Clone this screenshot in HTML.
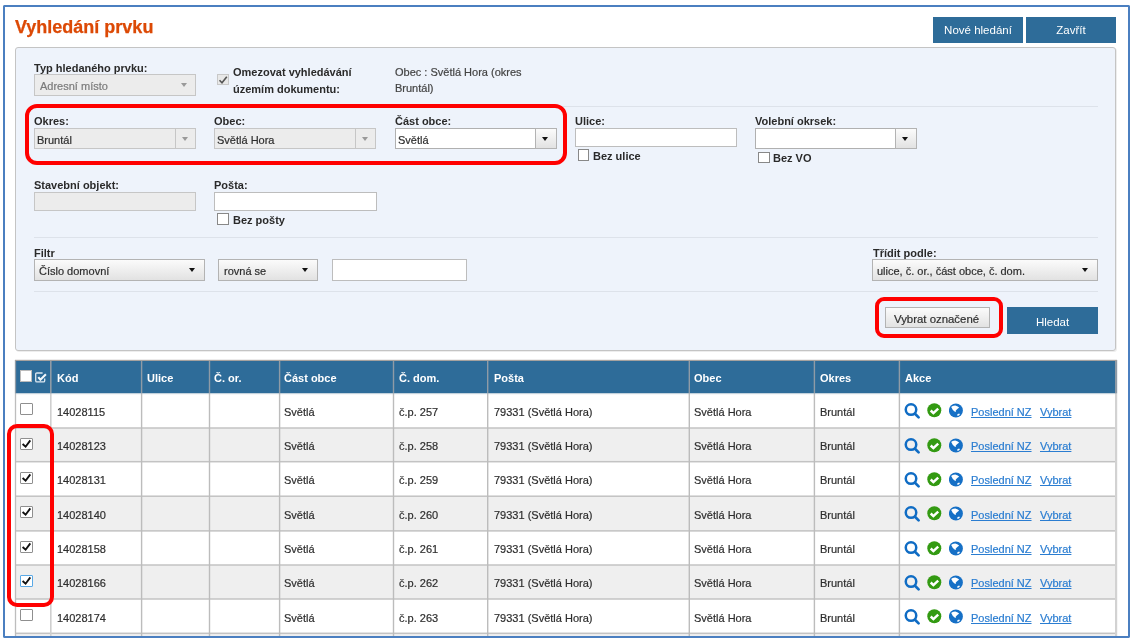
<!DOCTYPE html>
<html><head><meta charset="utf-8">
<style>
*{box-sizing:border-box}
html,body{margin:0;padding:0;background:#fff;width:1136px;height:642px;overflow:hidden;font-family:"Liberation Sans",sans-serif;color:#333}
.a{position:absolute}
#root{position:absolute;left:0;top:0;width:1136px;height:642px;will-change:transform}
#frame{left:3px;top:5px;width:1127px;height:633px;border:2px solid #4b7fc0;border-radius:2px}
#title{left:15px;top:17px;font:bold 18px "Liberation Sans",sans-serif;color:#dc4905;-webkit-text-stroke:0.25px #dc4905;white-space:nowrap}
.btn{background:#2e6c99;color:#fff;font-size:11.5px;text-align:center;white-space:nowrap}
#panel{left:15px;top:47px;width:1101px;height:304px;background:#eef3fb;border:1px solid #c4c4c4;border-radius:3px;box-shadow:1px 1px 0 rgba(0,0,0,.07)}
.lbl{font:bold 11px "Liberation Sans",sans-serif;color:#2a2a2a;white-space:nowrap;line-height:13px}
.txt{font:11px "Liberation Sans",sans-serif;color:#2e2e2e;-webkit-text-stroke-width:0.2px;white-space:nowrap;line-height:13px}
.inp{background:#fff;border:1px solid #bdbdbd}
.dis{background:#ececec;border:1px solid #c6c6c6}
.hr{background:#dde2ea}
.cb{border:1px solid #8f8f8f;background:#fff}
.red{border:4px solid #f00;border-radius:11px}
.selg{background:linear-gradient(#fbfbfb,#e2e2e2);border:1px solid #b3b3b3}
.arr{width:0;height:0;border-left:3.5px solid transparent;border-right:3.5px solid transparent;border-top:4px solid #111}
.arrg{width:0;height:0;border-left:3.5px solid transparent;border-right:3.5px solid transparent;border-top:4px solid #9a9a9a}
.th{background:#2e6b98}
.hd{font:bold 11px "Liberation Sans",sans-serif;color:#fff;white-space:nowrap;line-height:13px}
.vl{background:#c9c9c9}
.lnk{color:#2a7dd1;text-decoration:underline;text-decoration-skip-ink:none}
</style></head><body><div id="root">
<div id="frame" class="a"></div>
<div id="title" class="a">Vyhledání prvku</div>
<div class="a btn" style="left:933px;top:17px;width:90px;height:26px;line-height:26px">Nové hledání</div>
<div class="a btn" style="left:1026px;top:17px;width:90px;height:26px;line-height:26px">Zavřít</div>
<div id="panel" class="a"></div>
<div class="a lbl" style="left:34px;top:62px;">Typ hledaného prvku:</div>
<div class="a dis" style="left:34px;top:74px;width:162px;height:22px;"></div>
<div class="a txt" style="left:40px;top:80px;color:#7a7a7a">Adresní místo</div>
<div class="a arrg" style="left:181px;top:83px"></div>
<div class="a cb" style="left:217px;top:74px;width:12px;height:11px;background:#e8e8e8;border-color:#c8c8c8"></div>
<svg class="a" style="left:217px;top:74px" width="12" height="12"><path d="M2.5 6.2 L5 8.8 L9.8 2.8" stroke="#555" stroke-width="1.6" fill="none"/></svg>
<div class="a lbl" style="left:233px;top:66px;">Omezovat vyhledávání</div>
<div class="a lbl" style="left:233px;top:83px;">územím dokumentu:</div>
<div class="a txt" style="left:395px;top:66px;color:#444">Obec : Světlá Hora (okres</div>
<div class="a txt" style="left:395px;top:82px;color:#444">Bruntál)</div>
<div class="a hr" style="left:34px;top:106px;width:1064px;height:1px;"></div>
<div class="a lbl" style="left:34px;top:115px;">Okres:</div>
<div class="a dis" style="left:34px;top:128px;width:162px;height:21px;"></div>
<div class="a " style="left:175px;top:128px;width:1px;height:21px;background:#c6c6c6"></div>
<div class="a txt" style="left:37px;top:134px;">Bruntál</div>
<div class="a arrg" style="left:182px;top:137px"></div>
<div class="a lbl" style="left:214px;top:115px;">Obec:</div>
<div class="a dis" style="left:214px;top:128px;width:162px;height:21px;"></div>
<div class="a " style="left:355px;top:128px;width:1px;height:21px;background:#c6c6c6"></div>
<div class="a txt" style="left:217px;top:134px;">Světlá Hora</div>
<div class="a arrg" style="left:362px;top:137px"></div>
<div class="a lbl" style="left:395px;top:115px;">Část obce:</div>
<div class="a inp" style="left:395px;top:128px;width:162px;height:21px;border-color:#b0b0b0"></div>
<div class="a selg" style="left:535px;top:128px;width:22px;height:21px;"></div>
<div class="a txt" style="left:398px;top:134px;">Světlá</div>
<div class="a arr" style="left:542px;top:137px"></div>
<div class="a lbl" style="left:575px;top:115px;">Ulice:</div>
<div class="a inp" style="left:575px;top:128px;width:162px;height:19px;"></div>
<div class="a cb" style="left:578px;top:149px;width:11px;height:12px;border-color:#888"></div>
<div class="a lbl" style="left:593px;top:150px;">Bez ulice</div>
<div class="a lbl" style="left:755px;top:115px;">Volební okrsek:</div>
<div class="a inp" style="left:755px;top:128px;width:162px;height:21px;border-color:#b0b0b0"></div>
<div class="a selg" style="left:895px;top:128px;width:22px;height:21px;"></div>
<div class="a arr" style="left:902px;top:137px"></div>
<div class="a cb" style="left:758px;top:152px;width:12px;height:11px;border-color:#888"></div>
<div class="a lbl" style="left:773px;top:152px;">Bez VO</div>
<div class="a red" style="left:25px;top:104px;width:542px;height:61px;border-radius:12px"></div>
<div class="a lbl" style="left:34px;top:179px;">Stavební objekt:</div>
<div class="a dis" style="left:34px;top:192px;width:162px;height:19px;"></div>
<div class="a lbl" style="left:214px;top:179px;">Pošta:</div>
<div class="a inp" style="left:214px;top:192px;width:163px;height:19px;"></div>
<div class="a cb" style="left:217px;top:213px;width:12px;height:12px;border-color:#888"></div>
<div class="a lbl" style="left:233px;top:214px;">Bez pošty</div>
<div class="a hr" style="left:34px;top:237px;width:1064px;height:1px;"></div>
<div class="a lbl" style="left:34px;top:247px;">Filtr</div>
<div class="a selg" style="left:34px;top:259px;width:171px;height:22px;"></div>
<div class="a txt" style="left:39px;top:265px;">Číslo domovní</div>
<div class="a arr" style="left:189px;top:268px"></div>
<div class="a selg" style="left:218px;top:259px;width:100px;height:22px;"></div>
<div class="a txt" style="left:224px;top:265px;">rovná se</div>
<div class="a arr" style="left:302px;top:268px"></div>
<div class="a inp" style="left:332px;top:259px;width:135px;height:22px;"></div>
<div class="a lbl" style="left:873px;top:247px;">Třídit podle:</div>
<div class="a selg" style="left:872px;top:259px;width:226px;height:22px;"></div>
<div class="a txt" style="left:877px;top:265px;">ulice, č. or., část obce, č. dom.</div>
<div class="a arr" style="left:1082px;top:268px"></div>
<div class="a hr" style="left:34px;top:291px;width:1064px;height:1px;"></div>
<div class="a selg" style="left:885px;top:307px;width:105px;height:21px;"></div>
<div class="a txt" style="left:894px;top:313px;font-size:11.4px">Vybrat označené</div>
<div class="a red" style="left:875px;top:297px;width:128px;height:41px;border-radius:9px"></div>
<div class="a btn" style="left:1007px;top:307px;width:91px;height:27px;line-height:31px;font-size:11.5px">Hledat</div>
<svg class="a" style="left:0;top:0" width="1136" height="642"><rect x="15" y="360.5" width="1101" height="32.9" fill="#2e6c99"/><rect x="15" y="428" width="1101" height="33.70" fill="#efefef"/><rect x="15" y="496.2" width="1101" height="34.70" fill="#efefef"/><rect x="15" y="565" width="1101" height="34.00" fill="#efefef"/><rect x="15" y="633.3" width="1101" height="34.20" fill="#efefef"/><rect x="15" y="427.25" width="1102" height="1.5" fill="#c3c3c3"/><rect x="15" y="460.95" width="1102" height="1.5" fill="#c3c3c3"/><rect x="15" y="495.45" width="1102" height="1.5" fill="#c3c3c3"/><rect x="15" y="530.15" width="1102" height="1.5" fill="#c3c3c3"/><rect x="15" y="564.25" width="1102" height="1.5" fill="#c3c3c3"/><rect x="15" y="598.25" width="1102" height="1.5" fill="#c3c3c3"/><rect x="15" y="632.55" width="1102" height="1.5" fill="#c3c3c3"/><rect x="15" y="666.75" width="1102" height="1.5" fill="#c3c3c3"/><rect x="15" y="393.2" width="1102" height="1.2" fill="#d8dde2" opacity="0.6"/><rect x="14.85" y="393.4" width="1.3" height="250" fill="#bdbdbd"/><rect x="14.85" y="360" width="1.3" height="33.4" fill="#8f9ba6"/><rect x="50.00" y="393.4" width="1.6" height="250" fill="#cfcfcf"/><rect x="50.00" y="360" width="1.6" height="33.4" fill="#8f9ba6"/><rect x="140.90" y="393.4" width="1.4" height="250" fill="#bcbcbc"/><rect x="140.90" y="360" width="1.4" height="33.4" fill="#8f9ba6"/><rect x="208.80" y="393.4" width="1.4" height="250" fill="#bcbcbc"/><rect x="208.80" y="360" width="1.4" height="33.4" fill="#8f9ba6"/><rect x="278.90" y="393.4" width="1.4" height="250" fill="#bcbcbc"/><rect x="278.90" y="360" width="1.4" height="33.4" fill="#8f9ba6"/><rect x="392.80" y="393.4" width="1.4" height="250" fill="#bcbcbc"/><rect x="392.80" y="360" width="1.4" height="33.4" fill="#8f9ba6"/><rect x="487.00" y="393.4" width="1.4" height="250" fill="#bcbcbc"/><rect x="487.00" y="360" width="1.4" height="33.4" fill="#8f9ba6"/><rect x="688.60" y="393.4" width="1.4" height="250" fill="#bcbcbc"/><rect x="688.60" y="360" width="1.4" height="33.4" fill="#8f9ba6"/><rect x="813.70" y="393.4" width="1.4" height="250" fill="#bcbcbc"/><rect x="813.70" y="360" width="1.4" height="33.4" fill="#8f9ba6"/><rect x="898.70" y="393.4" width="1.4" height="250" fill="#bcbcbc"/><rect x="898.70" y="360" width="1.4" height="33.4" fill="#8f9ba6"/><rect x="1115.00" y="393.4" width="2.2" height="250" fill="#d2d2d2"/><rect x="1115.00" y="360" width="2.2" height="33.4" fill="#8f9ba6"/><rect x="15" y="359.8" width="1102" height="1.2" fill="#a6a29f"/></svg>
<div class="a hd" style="left:57px;top:372px;">Kód</div>
<div class="a hd" style="left:147px;top:372px;">Ulice</div>
<div class="a hd" style="left:214px;top:372px;">Č. or.</div>
<div class="a hd" style="left:284px;top:372px;">Část obce</div>
<div class="a hd" style="left:399px;top:372px;">Č. dom.</div>
<div class="a hd" style="left:494px;top:372px;">Pošta</div>
<div class="a hd" style="left:694px;top:372px;">Obec</div>
<div class="a hd" style="left:820px;top:372px;">Okres</div>
<div class="a hd" style="left:905px;top:372px;">Akce</div>
<div class="a cb" style="left:20px;top:370px;width:12px;height:12px;border-color:#bbb"></div>
<svg class="a" style="left:35px;top:372px" width="12" height="11"><path d="M7.6 1 H1.9 Q0.7 1 0.7 2.2 V8.7 Q0.7 9.9 1.9 9.9 H8.5 Q9.7 9.9 9.7 8.7 V6.4" fill="none" stroke="#dde8f1" stroke-width="1.3"/><path d="M3.3 5.1 L5.4 7.7 L10.9 2.2" stroke="#f4f8fb" stroke-width="2.1" fill="none"/></svg>
<div class="a cb" style="left:20px;top:403px;width:13px;height:12px;border-color:#8f8f8f;border-radius:1px"></div>
<div class="a txt" style="left:57px;top:406px;">14028115</div>
<div class="a txt" style="left:284px;top:406px;">Světlá</div>
<div class="a txt" style="left:399px;top:406px;">č.p. 257</div>
<div class="a txt" style="left:494px;top:406px;">79331 (Světlá Hora)</div>
<div class="a txt" style="left:694px;top:406px;">Světlá Hora</div>
<div class="a txt" style="left:820px;top:406px;">Bruntál</div>
<svg class="a" style="left:902px;top:403px" width="20" height="18"><circle cx="9" cy="6.6" r="5.25" stroke="#0f6cc4" stroke-width="2.5" fill="none"/><path d="M13 10.8 L16.6 14.4" stroke="#0f6cc4" stroke-width="2.7" stroke-linecap="round"/></svg>
<svg class="a" style="left:927px;top:403px" width="15" height="15"><circle cx="7.3" cy="7.3" r="7" fill="#339a12"/><path d="M3.7 7.5 L6.4 10.1 L11.2 5.6" stroke="#fff" stroke-width="2.5" fill="none"/></svg>
<svg class="a" style="left:949px;top:403px" width="15" height="15"><circle cx="6.9" cy="7.5" r="7" fill="#1670c6"/><path d="M2.2 4.1 Q3 2.9 4.6 2.7 L6.3 2.6 Q7.5 3.1 8.7 3.6 L10.1 4.4 Q9.3 5.2 8.6 5.7 L7.3 6.9 Q6.5 7.6 6.6 8.1 L7.1 9.1 Q6 8.9 5.2 8.3 L4.2 7.3 Q3.6 6.6 3.3 5.9 Z" fill="#fff"/><ellipse cx="9.4" cy="11.7" rx="1.5" ry="0.9" transform="rotate(-25 9.4 11.7)" fill="#fff"/></svg>
<div class="a txt" style="left:971px;top:406px;"><span class="lnk">Poslední NZ</span></div>
<div class="a txt" style="left:1040px;top:406px;"><span class="lnk">Vybrat</span></div>
<div class="a cb" style="left:20px;top:438px;width:13px;height:12px;border-color:#8f8f8f;border-radius:1px"></div>
<svg class="a" style="left:20px;top:438px" width="13" height="12"><path d="M2.6 6 L5.6 8.7 L10.3 2.4" stroke="#111" stroke-width="1.9" fill="none"/></svg>
<div class="a txt" style="left:57px;top:440px;">14028123</div>
<div class="a txt" style="left:284px;top:440px;">Světlá</div>
<div class="a txt" style="left:399px;top:440px;">č.p. 258</div>
<div class="a txt" style="left:494px;top:440px;">79331 (Světlá Hora)</div>
<div class="a txt" style="left:694px;top:440px;">Světlá Hora</div>
<div class="a txt" style="left:820px;top:440px;">Bruntál</div>
<svg class="a" style="left:902px;top:438px" width="20" height="18"><circle cx="9" cy="6.6" r="5.25" stroke="#0f6cc4" stroke-width="2.5" fill="none"/><path d="M13 10.8 L16.6 14.4" stroke="#0f6cc4" stroke-width="2.7" stroke-linecap="round"/></svg>
<svg class="a" style="left:927px;top:438px" width="15" height="15"><circle cx="7.3" cy="7.3" r="7" fill="#339a12"/><path d="M3.7 7.5 L6.4 10.1 L11.2 5.6" stroke="#fff" stroke-width="2.5" fill="none"/></svg>
<svg class="a" style="left:949px;top:438px" width="15" height="15"><circle cx="6.9" cy="7.5" r="7" fill="#1670c6"/><path d="M2.2 4.1 Q3 2.9 4.6 2.7 L6.3 2.6 Q7.5 3.1 8.7 3.6 L10.1 4.4 Q9.3 5.2 8.6 5.7 L7.3 6.9 Q6.5 7.6 6.6 8.1 L7.1 9.1 Q6 8.9 5.2 8.3 L4.2 7.3 Q3.6 6.6 3.3 5.9 Z" fill="#fff"/><ellipse cx="9.4" cy="11.7" rx="1.5" ry="0.9" transform="rotate(-25 9.4 11.7)" fill="#fff"/></svg>
<div class="a txt" style="left:971px;top:440px;"><span class="lnk">Poslední NZ</span></div>
<div class="a txt" style="left:1040px;top:440px;"><span class="lnk">Vybrat</span></div>
<div class="a cb" style="left:20px;top:472px;width:13px;height:12px;border-color:#8f8f8f;border-radius:1px"></div>
<svg class="a" style="left:20px;top:472px" width="13" height="12"><path d="M2.6 6 L5.6 8.7 L10.3 2.4" stroke="#111" stroke-width="1.9" fill="none"/></svg>
<div class="a txt" style="left:57px;top:474px;">14028131</div>
<div class="a txt" style="left:284px;top:474px;">Světlá</div>
<div class="a txt" style="left:399px;top:474px;">č.p. 259</div>
<div class="a txt" style="left:494px;top:474px;">79331 (Světlá Hora)</div>
<div class="a txt" style="left:694px;top:474px;">Světlá Hora</div>
<div class="a txt" style="left:820px;top:474px;">Bruntál</div>
<svg class="a" style="left:902px;top:472px" width="20" height="18"><circle cx="9" cy="6.6" r="5.25" stroke="#0f6cc4" stroke-width="2.5" fill="none"/><path d="M13 10.8 L16.6 14.4" stroke="#0f6cc4" stroke-width="2.7" stroke-linecap="round"/></svg>
<svg class="a" style="left:927px;top:472px" width="15" height="15"><circle cx="7.3" cy="7.3" r="7" fill="#339a12"/><path d="M3.7 7.5 L6.4 10.1 L11.2 5.6" stroke="#fff" stroke-width="2.5" fill="none"/></svg>
<svg class="a" style="left:949px;top:472px" width="15" height="15"><circle cx="6.9" cy="7.5" r="7" fill="#1670c6"/><path d="M2.2 4.1 Q3 2.9 4.6 2.7 L6.3 2.6 Q7.5 3.1 8.7 3.6 L10.1 4.4 Q9.3 5.2 8.6 5.7 L7.3 6.9 Q6.5 7.6 6.6 8.1 L7.1 9.1 Q6 8.9 5.2 8.3 L4.2 7.3 Q3.6 6.6 3.3 5.9 Z" fill="#fff"/><ellipse cx="9.4" cy="11.7" rx="1.5" ry="0.9" transform="rotate(-25 9.4 11.7)" fill="#fff"/></svg>
<div class="a txt" style="left:971px;top:474px;"><span class="lnk">Poslední NZ</span></div>
<div class="a txt" style="left:1040px;top:474px;"><span class="lnk">Vybrat</span></div>
<div class="a cb" style="left:20px;top:506px;width:13px;height:12px;border-color:#8f8f8f;border-radius:1px"></div>
<svg class="a" style="left:20px;top:506px" width="13" height="12"><path d="M2.6 6 L5.6 8.7 L10.3 2.4" stroke="#111" stroke-width="1.9" fill="none"/></svg>
<div class="a txt" style="left:57px;top:509px;">14028140</div>
<div class="a txt" style="left:284px;top:509px;">Světlá</div>
<div class="a txt" style="left:399px;top:509px;">č.p. 260</div>
<div class="a txt" style="left:494px;top:509px;">79331 (Světlá Hora)</div>
<div class="a txt" style="left:694px;top:509px;">Světlá Hora</div>
<div class="a txt" style="left:820px;top:509px;">Bruntál</div>
<svg class="a" style="left:902px;top:506px" width="20" height="18"><circle cx="9" cy="6.6" r="5.25" stroke="#0f6cc4" stroke-width="2.5" fill="none"/><path d="M13 10.8 L16.6 14.4" stroke="#0f6cc4" stroke-width="2.7" stroke-linecap="round"/></svg>
<svg class="a" style="left:927px;top:506px" width="15" height="15"><circle cx="7.3" cy="7.3" r="7" fill="#339a12"/><path d="M3.7 7.5 L6.4 10.1 L11.2 5.6" stroke="#fff" stroke-width="2.5" fill="none"/></svg>
<svg class="a" style="left:949px;top:506px" width="15" height="15"><circle cx="6.9" cy="7.5" r="7" fill="#1670c6"/><path d="M2.2 4.1 Q3 2.9 4.6 2.7 L6.3 2.6 Q7.5 3.1 8.7 3.6 L10.1 4.4 Q9.3 5.2 8.6 5.7 L7.3 6.9 Q6.5 7.6 6.6 8.1 L7.1 9.1 Q6 8.9 5.2 8.3 L4.2 7.3 Q3.6 6.6 3.3 5.9 Z" fill="#fff"/><ellipse cx="9.4" cy="11.7" rx="1.5" ry="0.9" transform="rotate(-25 9.4 11.7)" fill="#fff"/></svg>
<div class="a txt" style="left:971px;top:509px;"><span class="lnk">Poslední NZ</span></div>
<div class="a txt" style="left:1040px;top:509px;"><span class="lnk">Vybrat</span></div>
<div class="a cb" style="left:20px;top:541px;width:13px;height:12px;border-color:#8f8f8f;border-radius:1px"></div>
<svg class="a" style="left:20px;top:541px" width="13" height="12"><path d="M2.6 6 L5.6 8.7 L10.3 2.4" stroke="#111" stroke-width="1.9" fill="none"/></svg>
<div class="a txt" style="left:57px;top:543px;">14028158</div>
<div class="a txt" style="left:284px;top:543px;">Světlá</div>
<div class="a txt" style="left:399px;top:543px;">č.p. 261</div>
<div class="a txt" style="left:494px;top:543px;">79331 (Světlá Hora)</div>
<div class="a txt" style="left:694px;top:543px;">Světlá Hora</div>
<div class="a txt" style="left:820px;top:543px;">Bruntál</div>
<svg class="a" style="left:902px;top:541px" width="20" height="18"><circle cx="9" cy="6.6" r="5.25" stroke="#0f6cc4" stroke-width="2.5" fill="none"/><path d="M13 10.8 L16.6 14.4" stroke="#0f6cc4" stroke-width="2.7" stroke-linecap="round"/></svg>
<svg class="a" style="left:927px;top:541px" width="15" height="15"><circle cx="7.3" cy="7.3" r="7" fill="#339a12"/><path d="M3.7 7.5 L6.4 10.1 L11.2 5.6" stroke="#fff" stroke-width="2.5" fill="none"/></svg>
<svg class="a" style="left:949px;top:541px" width="15" height="15"><circle cx="6.9" cy="7.5" r="7" fill="#1670c6"/><path d="M2.2 4.1 Q3 2.9 4.6 2.7 L6.3 2.6 Q7.5 3.1 8.7 3.6 L10.1 4.4 Q9.3 5.2 8.6 5.7 L7.3 6.9 Q6.5 7.6 6.6 8.1 L7.1 9.1 Q6 8.9 5.2 8.3 L4.2 7.3 Q3.6 6.6 3.3 5.9 Z" fill="#fff"/><ellipse cx="9.4" cy="11.7" rx="1.5" ry="0.9" transform="rotate(-25 9.4 11.7)" fill="#fff"/></svg>
<div class="a txt" style="left:971px;top:543px;"><span class="lnk">Poslední NZ</span></div>
<div class="a txt" style="left:1040px;top:543px;"><span class="lnk">Vybrat</span></div>
<div class="a cb" style="left:20px;top:575px;width:13px;height:12px;border-color:#5aa9e6;border-radius:1px"></div>
<svg class="a" style="left:20px;top:575px" width="13" height="12"><path d="M2.6 6 L5.6 8.7 L10.3 2.4" stroke="#111" stroke-width="1.9" fill="none"/></svg>
<div class="a txt" style="left:57px;top:577px;">14028166</div>
<div class="a txt" style="left:284px;top:577px;">Světlá</div>
<div class="a txt" style="left:399px;top:577px;">č.p. 262</div>
<div class="a txt" style="left:494px;top:577px;">79331 (Světlá Hora)</div>
<div class="a txt" style="left:694px;top:577px;">Světlá Hora</div>
<div class="a txt" style="left:820px;top:577px;">Bruntál</div>
<svg class="a" style="left:902px;top:575px" width="20" height="18"><circle cx="9" cy="6.6" r="5.25" stroke="#0f6cc4" stroke-width="2.5" fill="none"/><path d="M13 10.8 L16.6 14.4" stroke="#0f6cc4" stroke-width="2.7" stroke-linecap="round"/></svg>
<svg class="a" style="left:927px;top:575px" width="15" height="15"><circle cx="7.3" cy="7.3" r="7" fill="#339a12"/><path d="M3.7 7.5 L6.4 10.1 L11.2 5.6" stroke="#fff" stroke-width="2.5" fill="none"/></svg>
<svg class="a" style="left:949px;top:575px" width="15" height="15"><circle cx="6.9" cy="7.5" r="7" fill="#1670c6"/><path d="M2.2 4.1 Q3 2.9 4.6 2.7 L6.3 2.6 Q7.5 3.1 8.7 3.6 L10.1 4.4 Q9.3 5.2 8.6 5.7 L7.3 6.9 Q6.5 7.6 6.6 8.1 L7.1 9.1 Q6 8.9 5.2 8.3 L4.2 7.3 Q3.6 6.6 3.3 5.9 Z" fill="#fff"/><ellipse cx="9.4" cy="11.7" rx="1.5" ry="0.9" transform="rotate(-25 9.4 11.7)" fill="#fff"/></svg>
<div class="a txt" style="left:971px;top:577px;"><span class="lnk">Poslední NZ</span></div>
<div class="a txt" style="left:1040px;top:577px;"><span class="lnk">Vybrat</span></div>
<div class="a cb" style="left:20px;top:609px;width:13px;height:12px;border-color:#8f8f8f;border-radius:1px"></div>
<div class="a txt" style="left:57px;top:612px;">14028174</div>
<div class="a txt" style="left:284px;top:612px;">Světlá</div>
<div class="a txt" style="left:399px;top:612px;">č.p. 263</div>
<div class="a txt" style="left:494px;top:612px;">79331 (Světlá Hora)</div>
<div class="a txt" style="left:694px;top:612px;">Světlá Hora</div>
<div class="a txt" style="left:820px;top:612px;">Bruntál</div>
<svg class="a" style="left:902px;top:609px" width="20" height="18"><circle cx="9" cy="6.6" r="5.25" stroke="#0f6cc4" stroke-width="2.5" fill="none"/><path d="M13 10.8 L16.6 14.4" stroke="#0f6cc4" stroke-width="2.7" stroke-linecap="round"/></svg>
<svg class="a" style="left:927px;top:609px" width="15" height="15"><circle cx="7.3" cy="7.3" r="7" fill="#339a12"/><path d="M3.7 7.5 L6.4 10.1 L11.2 5.6" stroke="#fff" stroke-width="2.5" fill="none"/></svg>
<svg class="a" style="left:949px;top:609px" width="15" height="15"><circle cx="6.9" cy="7.5" r="7" fill="#1670c6"/><path d="M2.2 4.1 Q3 2.9 4.6 2.7 L6.3 2.6 Q7.5 3.1 8.7 3.6 L10.1 4.4 Q9.3 5.2 8.6 5.7 L7.3 6.9 Q6.5 7.6 6.6 8.1 L7.1 9.1 Q6 8.9 5.2 8.3 L4.2 7.3 Q3.6 6.6 3.3 5.9 Z" fill="#fff"/><ellipse cx="9.4" cy="11.7" rx="1.5" ry="0.9" transform="rotate(-25 9.4 11.7)" fill="#fff"/></svg>
<div class="a txt" style="left:971px;top:612px;"><span class="lnk">Poslední NZ</span></div>
<div class="a txt" style="left:1040px;top:612px;"><span class="lnk">Vybrat</span></div>
<div class="a red" style="left:7px;top:424px;width:47px;height:183px;border-radius:10px"></div>
<div class="a" style="left:0;top:638px;width:1136px;height:4px;background:#fff"></div>
<div id="frame2" class="a" style="left:3px;top:5px;width:1127px;height:633px;border:2px solid #4b7fc0;border-radius:2px"></div>
</div></body></html>
